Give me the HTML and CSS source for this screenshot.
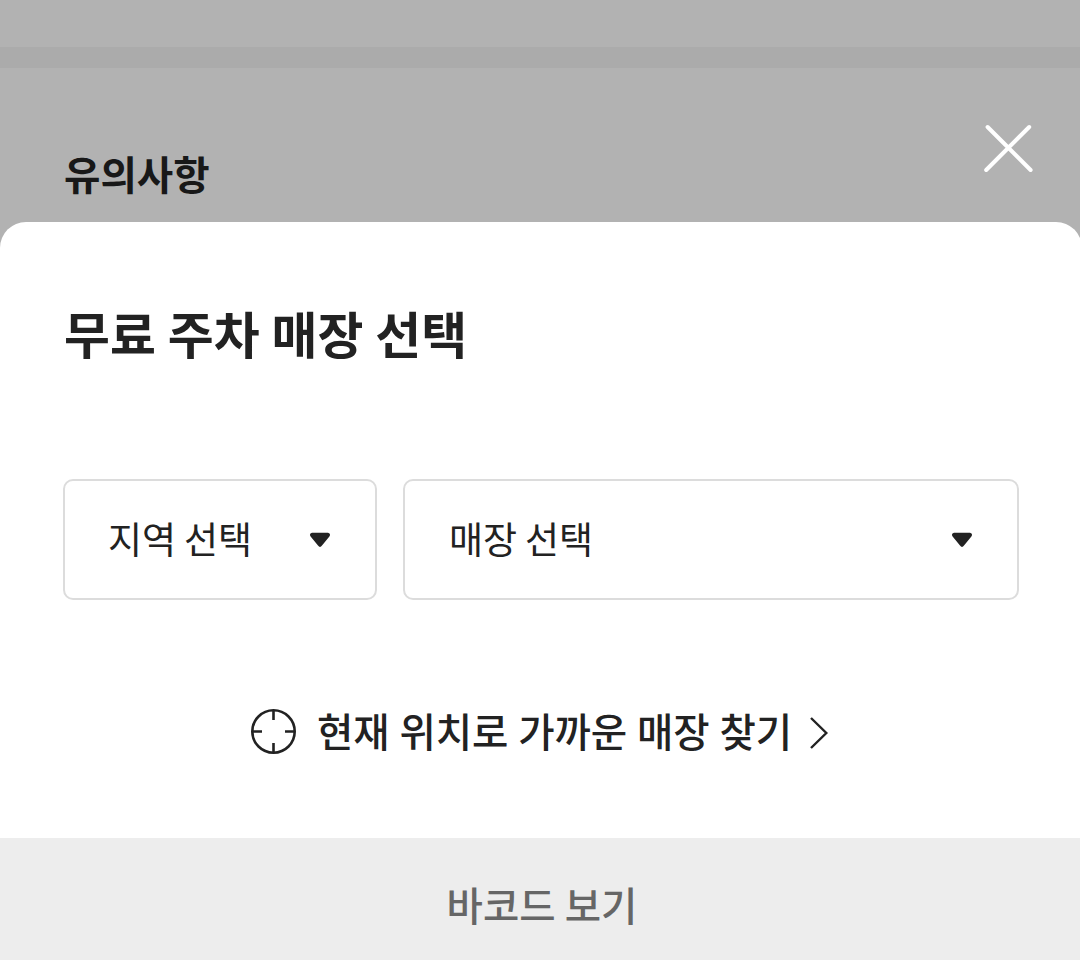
FILE: index.html
```
<!DOCTYPE html>
<html lang="ko">

<head>
    <meta charset="UTF-8">
    <meta name="viewport" content="width=device-width, initial-scale=1.0">
    <title>무료 주차 매장 선택</title>
    <link rel="stylesheet" href="styles.css">
</head>

<body>
    <!-- 딤 처리된 뒤쪽 화면 -->
    <div class="page">
        <div class="divider"></div>
        <div class="notice">
            <h3 class="notice-title">유의사항</h3>
            <button type="button" class="btn-close" aria-label="닫기">
                <svg width="52" height="52" viewBox="0 0 52 52">
                    <path d="M5.6 5 L48.6 48 M47.2 5 L4.2 48" />
                </svg>
            </button>
        </div>
    </div>

    <!-- 매장 선택 팝업 -->
    <div class="sheet">
        <div class="sheet-body">
            <h2 class="sheet-title">무료 주차 매장 선택</h2>

            <div class="select-wrap">
                <button type="button" class="select select-area">
                    <span>지역 선택</span>
                    <svg class="arrow" width="22" height="16" viewBox="0 0 22 16">
                        <path d="M3 0.8 H19 Q22.2 1.6 20.4 4.6 L13 13.6 Q11 16.2 9 13.6 L1.6 4.6 Q-0.2 1.6 3 0.8 Z" />
                    </svg>
                </button>
                <button type="button" class="select">
                    <span>매장 선택</span>
                    <svg class="arrow" width="22" height="16" viewBox="0 0 22 16">
                        <path d="M3 0.8 H19 Q22.2 1.6 20.4 4.6 L13 13.6 Q11 16.2 9 13.6 L1.6 4.6 Q-0.2 1.6 3 0.8 Z" />
                    </svg>
                </button>
            </div>

            <a href="#" class="near">
                <svg class="target" width="46" height="46" viewBox="0 0 46 46">
                    <circle cx="22.5" cy="23.5" r="21.2" />
                    <path d="M22.5 2 V12 M22.5 35 V45 M1 23.5 H11 M34 23.5 H44" />
                </svg>
                <span>현재 위치로 가까운 매장 찾기</span>
                <svg class="chevron" width="20" height="34" viewBox="0 0 20 34">
                    <path d="M2 2 L17.3 17 L2 32" />
                </svg>
            </a>
        </div>

        <button type="button" class="btn-barcode">바코드 보기</button>
    </div>
</body>

</html>
```

FILE: styles.css
```
* {
    margin: 0;
    padding: 0;
    box-sizing: border-box;
}

body {
    height: 960px;
    display: flex;
    flex-direction: column;
    overflow: hidden;
    background-color: #b2b2b2;
    color: #222;
    font-family: "Noto Sans CJK KR", sans-serif;
}

button {
    border: 0;
    background: none;
    font-family: inherit;
    color: inherit;
}

svg {
    display: block;
    flex: none;
    fill: none;
}

/* 뒤쪽 화면 */
.page {
    height: 222px;
    padding-top: 47px;
}

.divider {
    height: 21px;
    background-color: #ababab;
}

.notice {
    display: flex;
    justify-content: space-between;
    align-items: flex-start;
    padding: 54px 46px 0 64px;
}

.notice-title {
    margin-top: 21px;
    line-height: 60px;
    font-size: 39.6px;
    font-weight: 700;
    color: #181818;
}

.btn-close svg {
    stroke: #fff;
    stroke-width: 4;
    stroke-linecap: round;
}

/* 팝업 */
.sheet {
    flex: 1;
    display: flex;
    flex-direction: column;
    margin-right: -2px;
    border-radius: 26px 26px 0 0;
    background-color: #fff;
}

.sheet-body {
    flex: 1;
    padding: 72px 63px 0 63px;
}

.sheet-title {
    padding-left: 1px;
    line-height: 76px;
    font-size: 49.9px;
    font-weight: 700;
    word-spacing: -2px;
}

.select-wrap {
    display: grid;
    grid-template-columns: 314px 1fr;
    gap: 26px;
    margin-top: 109px;
}

.select {
    height: 121px;
    display: flex;
    justify-content: space-between;
    align-items: center;
    padding: 0 44px;
    border: 2px solid #dcdcdc;
    border-radius: 10px;
    font-size: 37px;
    word-spacing: -2.4px;
}

.select-area {
    padding-left: 43px;
}

.select span {
    padding-bottom: 4px;
}

.arrow {
    fill: #222;
}

.near {
    display: flex;
    justify-content: center;
    align-items: center;
    margin: 101px 2px 0 0;
    line-height: 58px;
    padding-bottom: 2px;
    font-size: 39.5px;
    font-weight: 500;
    word-spacing: -1.3px;
    color: #222;
    text-decoration: none;
}

.near span {
    padding-bottom: 2px;
}

.target {
    margin-right: 20px;
    stroke: #222;
    stroke-width: 2.6;
}

.chevron {
    margin: 4px 0 0 17px;
    stroke: #222;
    stroke-width: 2.4;
}

.btn-barcode {
    height: 122px;
    padding: 8px 0 0 2px;
    background-color: #ededed;
    font-size: 39.5px;
    font-weight: 500;
    word-spacing: -2px;
    color: #666;
}
```
